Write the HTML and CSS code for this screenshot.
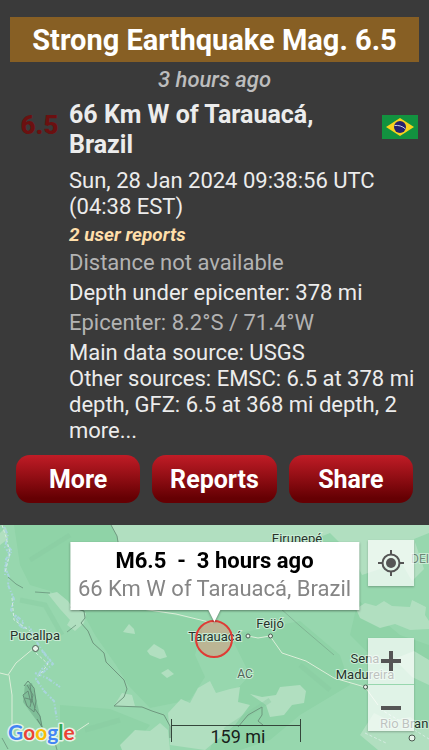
FILE: index.html
```
<!DOCTYPE html>
<html lang="en">
<head>
    <meta charset="UTF-8">
    <meta name="viewport" content="width=device-width, initial-scale=1.0">
    <title>Strong Earthquake Mag. 6.5</title>
    <link rel="stylesheet" href="styles.css">
</head>
<body>
    <main class="quake">
        <h1 class="quake_title">Strong Earthquake Mag. 6.5</h1>
        <p class="quake_ago">3 hours ago</p>
        <div class="quake_place">
            <div class="quake_mag">6.5</div>
            <h2 class="quake_location">66 Km W of Tarauacá, Brazil</h2>
            <svg class="quake_flag" viewBox="0 0 36 24" role="img" aria-label="Brazil">
                <rect width="36" height="24" fill="#12923f"/>
                <path d="M18 3 32 12 18 21 4 12Z" fill="#f8d21c"/>
                <circle cx="18" cy="12" r="6" fill="#26216f"/>
                <path d="M12.500 10.500C16 10 20.500 11 23.500 14" fill="none" stroke="#c9d0e0" stroke-width="1"/>
            </svg>
        </div>
        <div class="quake_details">
            <p class="detail">Sun, 28 Jan 2024 09:38:56 UTC (04:38 EST)</p>
            <p class="detail detail-reports">2 user reports</p>
            <p class="detail detail-muted">Distance not available</p>
            <p class="detail">Depth under epicenter: 378 mi</p>
            <p class="detail detail-muted">Epicenter: 8.2°S / 71.4°W</p>
            <p class="detail">Main data source: USGS<br>Other sources: EMSC: 6.5 at 378 mi depth, GFZ: 6.5 at 368 mi depth, 2 more...</p>
        </div>
        <div class="actions">
            <button type="button" class="actions_button">More</button>
            <button type="button" class="actions_button">Reports</button>
            <button type="button" class="actions_button">Share</button>
        </div>
    </main>

    <section class="map" aria-label="Map">
        <svg class="map_canvas" viewBox="0 0 429 225" preserveAspectRatio="xMidYMid slice">
            <rect width="429" height="225" fill="#97d7ae"/>

            <!-- darker forest -->
            <g fill="#8fd3a7">
                <path d="M14 0H110L118 12 112 30 70 40 72 82 50 66 30 60 20 40Z"/>
                <path d="M82 86 142 84 205 96 195 130 205 152 190 175 150 183 128 160 116 140 95 110Z"/>
                <path d="M230 110 300 96 340 130 350 160 300 190 270 215 240 225 210 225 222 180 250 150Z"/>
                <path d="M358 75 400 110 429 120V150L380 140 350 110Z"/>
                <path d="M60 180 110 184 150 200 130 225H60Z"/>
            </g>

            <!-- lighter clearings -->
            <g fill="#b1dfc0">
                <path d="M111 0H429V8L414 14 424 44 412 56 398 32 380 44 362 50 352 30 330 8 300 20H119L117 11Z"/>
                <path d="M48 69 57 67 68 76 72 82 86 88 84 98 75 106 67 100 70 95 60 84Z"/>
                <path d="M123 107 129 99 134 104 135 109 128 108Z"/>
                <path d="M147 126 154 119 164 125 167 132 160 134 150 130Z"/>
                <path d="M161 148 168 144 174 149 167 153Z"/>
                <path d="M114 181 122 168 132 170 135 181Z"/>
                <path d="M168 188 181 174 190 178 198 163 210 156 216 168 230 164 240 162 238 177 250 180 235 200 205 225 170 220 170 210Z"/>
                <path d="M250 169 262 172 276 170 280 162 300 160 306 166 304 178 292 180 284 190 270 192 266 180Z"/>
                <path d="M356 84 365 78 376 81 384 76 392 81 410 82 412 75 426 82 425 90 429 96V104L410 105 395 99 380 103 360 93Z"/>
                <path d="M394 134 414 126 429 135V160L412 152Z"/>
                <path d="M120 220 135 205 150 206 160 198 168 205 170 225H122Z"/>
                <path d="M360 210 374 188 390 196 410 192 429 204V225H378Z"/>
                <path d="M0 8 6 2 8 14 0 20Z"/>
            </g>
            <g fill="none" stroke="#86cba0" stroke-width="5" opacity=".4">
                <path d="M30 35 70 10M20 75 45 80 62 110M85 205 120 195M225 205 270 175M300 140 330 165M330 60 350 75"/>
            </g>

            <!-- rivers -->
            <g fill="none" stroke="#a9d5dd" stroke-width="2" stroke-dasharray="2 1 4 2 1 2">
                <path d="M4 2 8 10 5 22 10 30 5 42 9 52 8 60 14 74 11 85 18 96 22 103 30 102 34 113 42 125 50 135 42 144 36 154 44 166 54 176 57 195"/>
                <path d="M7 20 12 26 6 34 5 50M15 90 24 97 19 101M42 126 53 139 41 149M35 148 47 153 60 162"/>
            </g>
            <g fill="none" stroke="#d3ebdf" stroke-width="1" stroke-dasharray="3 2">
                <path d="M2 0 6 12 10 28 5 48M12 73 14 95 30 106M36 128 48 139 39 151M380 184 400 196 429 214M365 208 386 218"/>
            </g>

            <!-- mountains -->
            <path d="M25 160 32 158 38 182 43 204 31 188 23 177Z" fill="#6fae89" opacity=".6"/>
            <g fill="none" stroke="#668f78" stroke-width="1">
                <path d="M24 161 28 156 34 163 36 176 34 187 27 181 23 170 28 166 31 178M27 160 33 170 30 182M25 173 33 175M35 184 40 191 42 202 37 194M30 160 32 175 35 183"/>
                <path d="M2 213 8 224M54 214 57 225M67 107 76 100M8 52 16 59 23 63M35 67 50 68" opacity=".75"/>
            </g>

            <!-- borders -->
            <g fill="none" stroke="#6f987f" stroke-width="1">
                <path d="M111 0 117 11 118 17M70 82 84 86 85 93 81 98 88 106 93 118 104 128 106 137 117 148 124 155 127 164 124 172 114 181 142 182 152 186 164 190 170 201 170 213"/>
                <path d="M238 202 248 190 262 182 262 190 258 196 263 200"/>
                <path d="M280 83 300 101 334 130" opacity=".5"/>
            </g>

            <!-- roads -->
            <g fill="none" stroke="#dceed9" stroke-width="1">
                <path d="M0 148 8 150 16 138 34 123M9 150 12 170 12 205M77 206 89 198"/>
                <path d="M142 84 176 89 213 98M248 111 258 113 270 111 282 128 306 136 334 153 365 162 378 180"/>
            </g>

            <!-- epicenter -->
            <circle class="map_epicenter" cx="214" cy="114" r="18"/>

            <g class="map_towns">
                <circle cx="35.500" cy="123.500" r="3"/>
                <circle cx="248" cy="111" r="2"/>
                <circle cx="270.500" cy="111" r="2"/>
                <circle cx="365.500" cy="162" r="2"/>
                <circle cx="412" cy="213" r="3"/>
            </g>
            <g class="map_labels">
                <text x="35" y="115">Pucallpa</text>
                <text x="297" y="18">Eirunepé</text>
                <text x="215" y="116">Tarauacá</text>
                <text x="270" y="103">Feijó</text>
                <text x="365" y="138">Sena</text>
                <text x="365" y="154">Madureira</text>
                <text x="380" y="203" class="map_label-start">Rio Bran</text>
                <text x="245" y="153" class="map_label-state">AC</text>
                <text x="411" y="38" class="map_label-region">DEI</text>
            </g>
            <circle class="map_epicenter-ring" cx="214" cy="114" r="18"/>

            <path d="M171.500 194V217M171.500 200.500H300.500M300.500 194V217" fill="none" stroke="#35463b"/>
            <text x="238" y="218" class="map_scale">159 mi</text>

            <text x="8" y="215" class="map_logo"><tspan fill="#4285f4">G</tspan><tspan fill="#ea4335">o</tspan><tspan fill="#fbbc05">o</tspan><tspan fill="#4285f4">g</tspan><tspan fill="#34a853">l</tspan><tspan fill="#ea4335">e</tspan></text>
        </svg>

        <div class="popup">
            <strong class="popup_title">M6.5&nbsp; - &nbsp;3 hours ago</strong>
            <span class="popup_place">66 Km W of Tarauacá, Brazil</span>
        </div>

        <button type="button" class="map_button map_locate" aria-label="My location">
            <svg viewBox="0 0 26 26" width="26" height="26">
                <circle cx="13" cy="13" r="8.500" fill="none" stroke="#555" stroke-width="2"/>
                <circle cx="13" cy="13" r="5" fill="#555"/>
                <path d="M13 0V5M13 21V26M0 13H5M21 13H26" stroke="#555" stroke-width="2"/>
            </svg>
        </button>
        <div class="map_zoom">
            <button type="button" class="map_button" aria-label="Zoom in">
                <svg viewBox="0 0 20 20" width="20" height="20"><path d="M10 0V20M0 10H20" stroke="#555" stroke-width="4"/></svg>
            </button>
            <button type="button" class="map_button" aria-label="Zoom out">
                <svg viewBox="0 0 20 20" width="20" height="20"><path d="M0 10H20" stroke="#555" stroke-width="4"/></svg>
            </button>
        </div>
    </section>
</body>
</html>
```
FILE: styles.css
```
* {
    box-sizing: border-box;
}
body {
    margin: 0;
    min-height: 100vh;
    display: flex;
    flex-direction: column;
    background-color: #3a3a3a;
    color: #ececec;
    font-family: Roboto, "Liberation Sans", sans-serif;
    font-size: 22px;
    line-height: 26px;
}
h1, h2, p {
    margin: 0;
}
.quake {
    padding: 17px 10px 22px;
}
.quake_title {
    background-color: #875f24;
    color: white;
    font-size: 29px;
    line-height: 44px;
    padding-top: 1px;
    text-align: center;
    margin-bottom: 5px;
}
.quake_ago {
    color: #bdbdbd;
    font-style: italic;
    font-weight: 500;
    text-align: center;
    margin-bottom: 7px;
}
.quake_place {
    display: grid;
    grid-template-columns: 59px 1fr 36px;
    padding-right: 1px;
    margin-bottom: 8px;
}
.quake_mag {
    color: #6b1010;
    font-size: 26px;
    font-weight: 900;
    line-height: 50px;
    text-align: center;
}
.quake_location {
    font-size: 25px;
    line-height: 30px;
}
.quake_flag {
    width: 36px;
    height: 24px;
    margin-top: 15px;
}
.quake_details {
    display: flex;
    flex-direction: column;
    gap: 4px;
    padding-left: 59px;
}
.detail-reports {
    color: #ffdfaa;
    font-size: 19px;
    font-style: italic;
    font-weight: bold;
    line-height: 22px;
}
.detail-muted {
    color: #b3b3b3;
}
.actions {
    display: flex;
    gap: 12px;
    padding: 0 6px;
    margin-top: 11px;
}
.actions_button {
    flex: 1;
    height: 48px;
    padding: 0;
    border: none;
    border-radius: 14px;
    background: linear-gradient(#c01c26, #650003 90%);
    color: white;
    font-family: inherit;
    font-size: 25px;
    font-weight: bold;
    cursor: pointer;
}
.map {
    flex: 1;
    position: relative;
    min-height: 225px;
    overflow: hidden;
}
.map_canvas {
    position: absolute;
    width: 100%;
    height: 100%;
}
.map_epicenter {
    fill: #e0937a;
    fill-opacity: .5;
}
.map_epicenter-ring {
    fill: none;
    stroke: #df3b35;
    stroke-width: 2px;
}
.map_towns {
    fill: #e9f5ec;
    stroke: #4b5a50;
    stroke-width: 1px;
}
.map_labels {
    fill: #26332b;
    stroke: #c9ecd5;
    stroke-width: 2px;
    paint-order: stroke;
    font-size: 13px;
    text-anchor: middle;
}
.map_labels .map_label-start {
    text-anchor: start;
}
.map_labels .map_label-state {
    fill: #4f6357;
    font-size: 12px;
}
.map_labels .map_label-region {
    fill: #6c8576;
    font-size: 12px;
    text-anchor: start;
}
.map_scale {
    fill: #18211b;
    font-size: 18px;
    text-anchor: middle;
}
.map_logo {
    font-family: Lato, "Open Sans", sans-serif;
    font-size: 21px;
    font-weight: bold;
    stroke: #e3f3e8;
    stroke-width: 3px;
    stroke-linejoin: round;
    paint-order: stroke;
}
.popup {
    position: absolute;
    top: 17px;
    left: 50%;
    transform: translateX(-50%);
    display: flex;
    flex-direction: column;
    align-items: center;
    padding: 6px 8px 8px;
    background-color: white;
    white-space: nowrap;
    filter: drop-shadow(0 1px 1px rgba(0, 0, 0, .4));
}
.popup::after {
    content: "";
    position: absolute;
    top: 100%;
    left: 50%;
    margin-left: -6px;
    border: 6px solid transparent;
    border-top: 12px solid white;
    border-bottom: none;
}
.popup_title {
    color: black;
    margin-bottom: 2px;
}
.popup_place {
    color: #858585;
}
.map_button {
    display: flex;
    align-items: center;
    justify-content: center;
    width: 46px;
    height: 46px;
    padding: 0;
    border: none;
    background-color: rgba(255, 255, 255, .7);
    cursor: pointer;
}
.map_locate {
    position: absolute;
    top: 15px;
    right: 15px;
    box-shadow: 0 1px 2px rgba(0, 0, 0, .25);
}
.map_zoom {
    position: absolute;
    right: 15px;
    bottom: 19px;
    display: flex;
    flex-direction: column;
    gap: 1px;
    box-shadow: 0 1px 2px rgba(0, 0, 0, .25);
}
```
